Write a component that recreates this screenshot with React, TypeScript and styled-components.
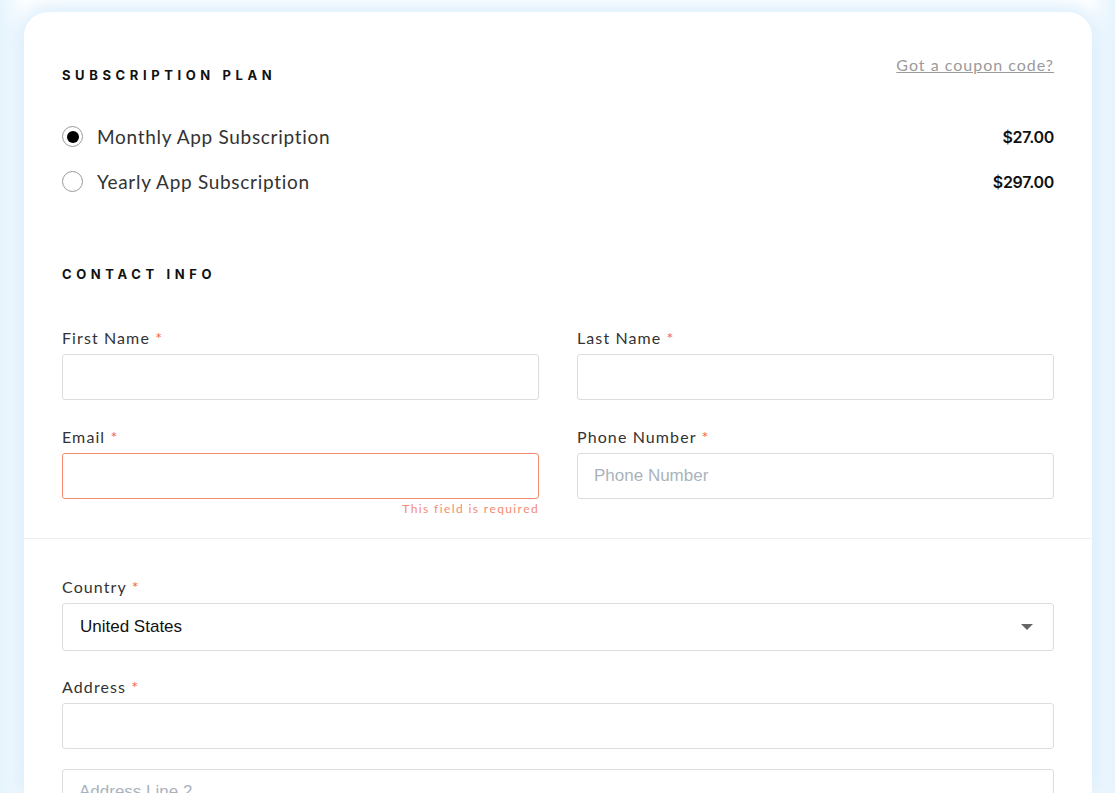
import React from 'react';
import styled, { createGlobalStyle } from 'styled-components';

const Global = createGlobalStyle`
  html, body { margin: 0; background: #fff; overflow: hidden; }
  body { font-family: Lato, "Noto Sans", sans-serif; }
`;

const Page = styled.div`
  padding: 12px 23px 0 24px;
  height: 793px;
  box-sizing: border-box;
  background: linear-gradient(90deg, #e6f4fd 0, #fff 26px, #fff calc(100% - 26px), #e6f4fd 100%);
`;

const Card = styled.div`
  background: #fff;
  border-radius: 24px 24px 0 0;
  box-shadow: 0 0 18px 6px rgba(150, 205, 245, 0.35);
  height: 100%;
`;

const Section = styled.div`
  padding: 38px 38px 12px;
`;

const Head = styled.div`
  display: flex;
  justify-content: space-between;
  align-items: flex-start;
`;

const Title = styled.h2`
  margin: 0;
  padding-top: 17px;
  font-family: Inter, sans-serif;
  font-weight: 700;
  font-size: 13px;
  letter-spacing: 4.6px;
  color: #111;
`;

const Coupon = styled.a`
  font-size: 16px;
  color: #9a9a9a;
  text-decoration: underline;
  padding-top: 5px;
  letter-spacing: 1px;
`;

const Plans = styled.div`
  margin-top: 42px;
  display: flex;
  flex-direction: column;
  gap: 22px;
`;

const Plan = styled.label`
  display: flex;
  align-items: center;
  font-size: 19px;
  color: #333;
  letter-spacing: 0.7px;
`;

const Radio = styled.span<{ $on?: boolean }>`
  width: 21px;
  height: 21px;
  border-radius: 50%;
  border: 1px solid #999;
  box-sizing: border-box;
  margin-right: 14px;
  display: grid;
  place-items: center;
  &::after {
    content: '';
    width: 12px;
    height: 12px;
    border-radius: 50%;
    background: ${p => (p.$on ? '#000' : 'transparent')};
  }
`;

const Price = styled.span`
  margin-left: auto;
  font-family: Inter, sans-serif;
  font-weight: 600;
  font-size: 16px;
  color: #111;
  letter-spacing: -0.3px;
`;

const Contact = styled(Title)`
  margin-top: 73px;
  padding-top: 0;
`;

const Grid = styled.div`
  display: grid;
  grid-template-columns: 1fr 1fr;
  column-gap: 38px;
  margin-top: 46px;
`;

const Field = styled.div<{ $h?: number }>`
  display: flex;
  flex-direction: column;
  min-height: ${p => p.$h || 99}px;
`;

const Label = styled.label`
  font-size: 16px;
  color: #333;
  letter-spacing: 1.1px;
  height: 18px;
  margin-bottom: 8px;
  span { color: #f2664a; }
`;

const Input = styled.input<{ $err?: boolean }>`
  height: 46px;
  box-sizing: border-box;
  border: 1px solid ${p => (p.$err ? '#f58a74' : '#ddd')};
  border-radius: 3px;
  padding: 0 16px;
  font-family: "Liberation Sans", Arial, sans-serif;
  font-size: 17px;
  &::placeholder { color: #a9b3bd; }
`;

const Error = styled.div`
  text-align: right;
  font-size: 12px;
  color: #f58a74;
  letter-spacing: 1.4px;
  margin-top: 2px;
`;

const Divider = styled.hr`
  border: 0;
  border-top: 1px solid #eee;
  margin: 0;
`;

const Select = styled.div`
  height: 48px;
  box-sizing: border-box;
  border: 1px solid #ddd;
  border-radius: 3px;
  padding: 0 20px 0 17px;
  display: flex;
  align-items: center;
  justify-content: space-between;
  font-family: "Liberation Sans", Arial, sans-serif;
  font-size: 17px;
  color: #111;
`;

const Caret = styled.span`
  border-left: 6px solid transparent;
  border-right: 6px solid transparent;
  border-top: 6px solid #666;
`;

const Lower = styled.div`
  padding: 38px 38px 0;
  display: flex;
  flex-direction: column;
`;

const App: React.FC = () => (
  <>
    <Global />
    <Page>
      <Card>
        <Section>
          <Head>
            <Title>SUBSCRIPTION PLAN</Title>
            <Coupon>Got a coupon code?</Coupon>
          </Head>
          <Plans>
            <Plan><Radio $on />Monthly App Subscription<Price>$27.00</Price></Plan>
            <Plan><Radio />Yearly App Subscription<Price>$297.00</Price></Plan>
          </Plans>
          <Contact>CONTACT INFO</Contact>
          <Grid>
            <Field><Label>First Name <span>*</span></Label><Input /></Field>
            <Field><Label>Last Name <span>*</span></Label><Input /></Field>
            <Field>
              <Label>Email <span>*</span></Label>
              <Input $err />
              <Error>This field is required</Error>
            </Field>
            <Field><Label>Phone Number <span>*</span></Label><Input placeholder="Phone Number" /></Field>
          </Grid>
        </Section>
        <Divider />
        <Lower>
          <Field $h={100}>
            <Label>Country <span>*</span></Label>
            <Select>United States<Caret /></Select>
          </Field>
          <Field $h={92}>
            <Label>Address <span>*</span></Label>
            <Input />
          </Field>
          <Input placeholder="Address Line 2" />
        </Lower>
      </Card>
    </Page>
  </>
);

export default App;
